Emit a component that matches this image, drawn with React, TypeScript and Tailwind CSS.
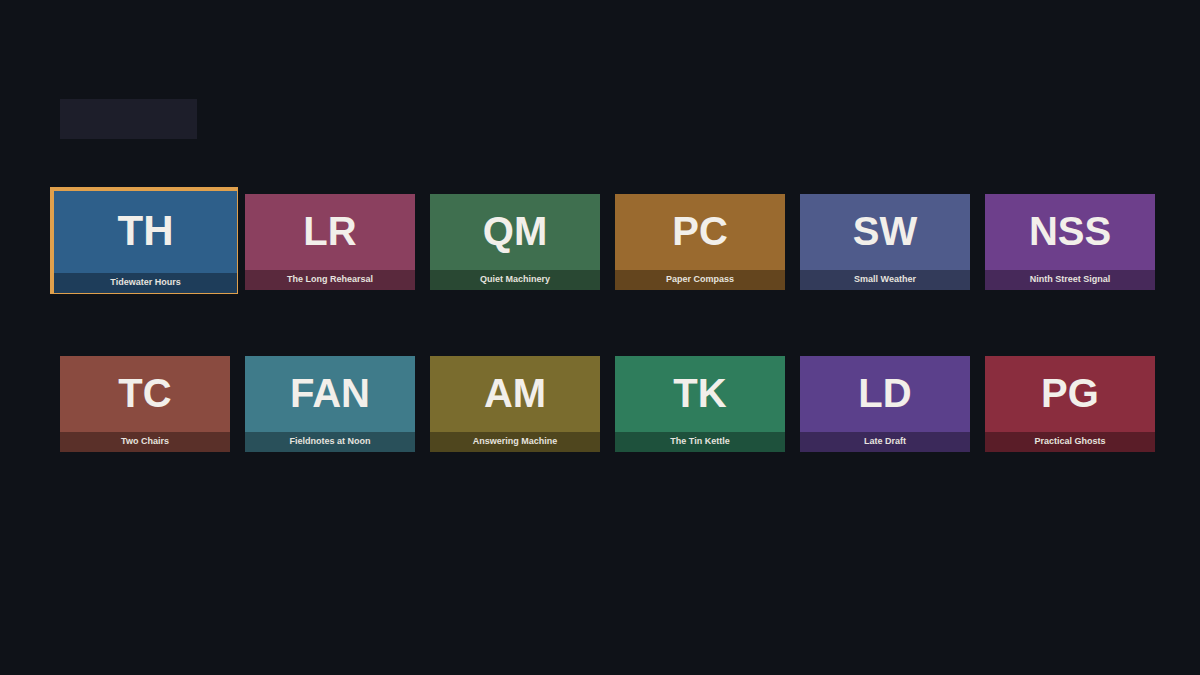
import clsx from "clsx";

interface Show {
  initials: string;
  title: string;
  color: string;
}

const shows: Show[] = [
  { initials: "TH", title: "Tidewater Hours", color: "bg-[#2e5f8a]" },
  { initials: "LR", title: "The Long Rehearsal", color: "bg-[#8b405f]" },
  { initials: "QM", title: "Quiet Machinery", color: "bg-[#3f6f4f]" },
  { initials: "PC", title: "Paper Compass", color: "bg-[#9a6a2f]" },
  { initials: "SW", title: "Small Weather", color: "bg-[#4f5b8b]" },
  { initials: "NSS", title: "Ninth Street Signal", color: "bg-[#6d3f8b]" },
  { initials: "TC", title: "Two Chairs", color: "bg-[#8a4b40]" },
  { initials: "FAN", title: "Fieldnotes at Noon", color: "bg-[#3f7b8a]" },
  { initials: "AM", title: "Answering Machine", color: "bg-[#7a6c2e]" },
  { initials: "TK", title: "The Tin Kettle", color: "bg-[#2f7d5c]" },
  { initials: "LD", title: "Late Draft", color: "bg-[#5b408b]" },
  { initials: "PG", title: "Practical Ghosts", color: "bg-[#8a2d3e]" },
];

interface ShowCardProps {
  show: Show;
  focused?: boolean;
}

function ShowCard({ show, focused = false }: ShowCardProps) {
  return (
    <button
      type="button"
      className={clsx(
        "flex flex-col text-[#f2efea] font-bold outline-none",
        show.color,
        // the focused card grows past its grid cell
        focused
          ? "-mt-[7px] -mb-1 -ml-2.5 -mr-2 h-[107px] border-t-4 border-l-4 border-r border-b border-[#e0a04c]"
          : "h-24"
      )}
    >
      <span
        className={clsx(
          "flex flex-1 w-full items-center justify-center pb-0.5 leading-none",
          focused ? "text-[42px]" : "text-[40px]"
        )}
      >
        {show.initials}
      </span>
      <span className="flex h-5 w-full items-center justify-center bg-black/35 text-[9px] text-[#e6e3df]">
        {show.title}
      </span>
    </button>
  );
}

export default function App() {
  return (
    <main className="min-h-screen bg-[#0f1218] pt-[99px] pl-[60px] pr-[45px] font-['Liberation_Sans',Arial,sans-serif]">
      {/* Heading placeholder */}
      <div className="h-10 w-[137px] bg-[#1d1e2a]" />

      <div className="mt-[55px] grid grid-cols-6 items-start gap-x-[15px] gap-y-[66px]">
        {shows.map((show, index) => (
          <ShowCard key={show.title} show={show} focused={index === 0} />
        ))}
      </div>
    </main>
  );
}
